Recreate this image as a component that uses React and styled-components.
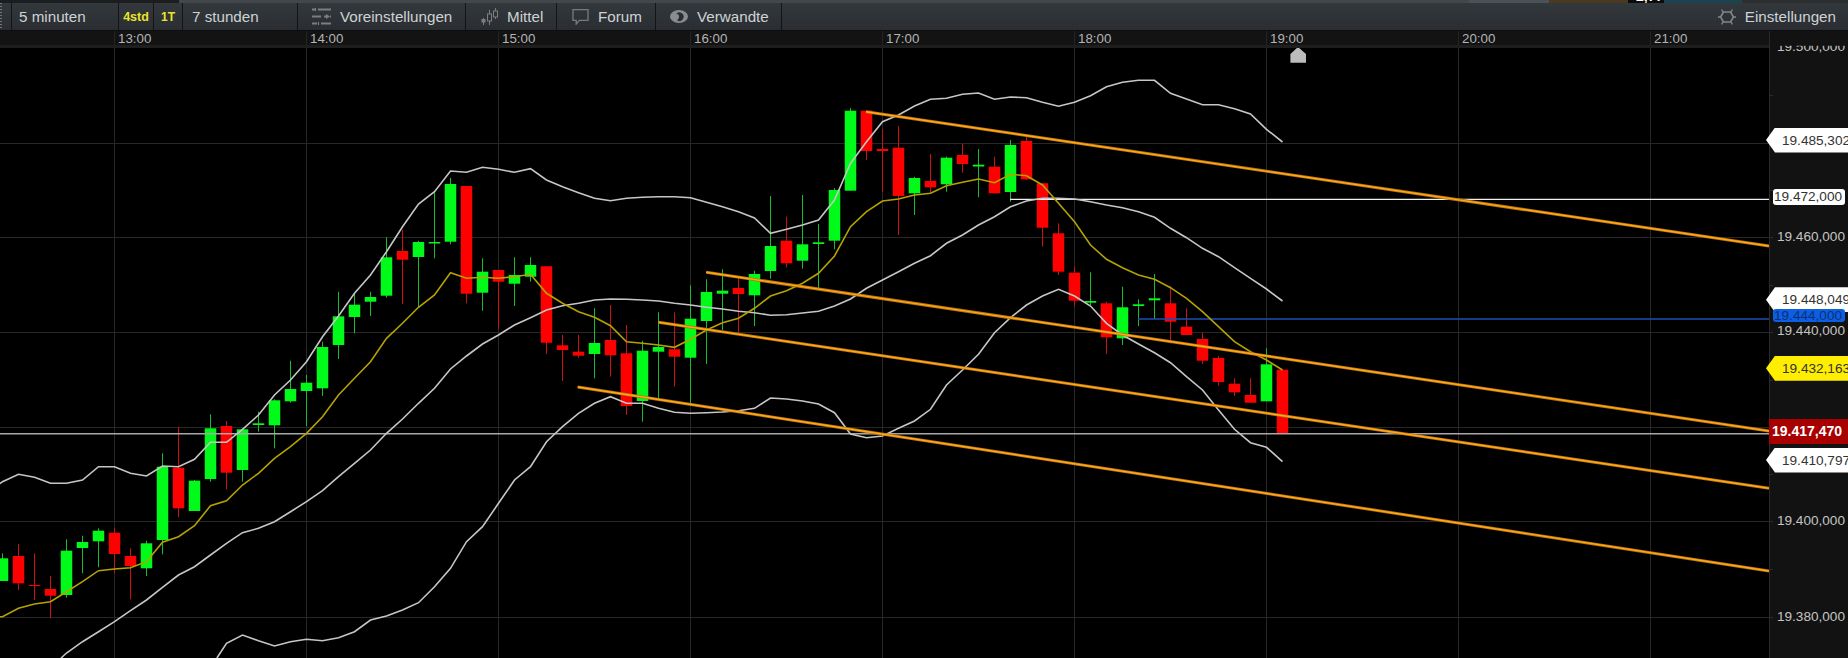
import React from 'react';
import styled, {createGlobalStyle} from 'styled-components'

const GlobalStyle = createGlobalStyle`
    html, body {
        margin: 0;
        padding: 0;
        background: #000;
    }
    * {
        box-sizing: border-box;
    }
`

// color, wick top, body top, body bottom, wick bottom
const candles = [
    ['g',553.3,558.3,581,581],['r',544,556,583.3,590],['r',553.3,585,586,600],['r',576,589,595.7,618.3],
    ['g',539.3,550.7,595,597.7],['g',535.7,542,548,573.3],['g',528.3,530.7,541.3,567.3],['r',528.3,532.7,554,573.3],
    ['r',548.3,556,566,599.3],['g',540.7,543.3,568.3,576],['g',453.3,466.7,540,554.3],['r',426.7,467.7,508.3,517.3],
    ['g',480,480.7,511,511],['g',414.3,428.3,479,481.7],['r',421,426,472.7,489.3],['g',428.3,429.3,470,481.7],
    ['g',411.7,423.3,425,431.7],['g',399.3,400.3,425.3,448.3],['g',360.7,389,401.3,402.7],['g',375,382.7,391,426],
    ['g',341.7,347,388.3,396],['g',291.7,316.3,345,359],['g',292.7,304.7,317,333.3],['g',291.7,297,301.7,316],
    ['g',237.3,257.3,295.7,297.7],['r',230,251,259.7,304],['g',240.7,242,257,307.7],['g',191.7,242,243.5,258.3],
    ['g',178,184,241.7,244.3],['r',186,186,293.7,303.3],['g',258.3,271.7,292.7,310.7],['r',270,270,281.7,329],
    ['g',257.3,275,283.7,306],['g',257.3,265,276.7,281.7],['r',266.3,266.3,342.7,354],['r',335,345.3,350,381],
    ['r',335,351.7,355.7,357.7],['g',308.3,343,354,378.3],['r',305,340,355.3,376.7],['r',325,353.3,406,415],
    ['g',340.7,350.7,401,421.7],['g',312.3,347,351.7,398.3],['r',312.3,349.3,356.7,386.7],['g',285.3,318.7,357.7,403.3],
    ['g',279.3,292,321,364],['g',269.3,290.7,293.7,330],['r',278.3,288,294,333.3],['g',270.7,274,295.3,326],
    ['g',196,246,271,278.7],['r',216.7,240.7,263.3,267.3],['g',195,244.3,260.7,268.7],['g',224,242.3,244,288.3],
    ['g',188,190,240.7,249.3],['g',108,110.7,190.7,190.7],['r',110.7,110.7,151,160],['r',129.3,149,151,192],
    ['r',126,147.7,196,235],['g',176.7,178,193.3,215],['r',154,181,187.3,193],['g',156.7,157.7,184.3,191.7],
    ['r',144,155,164,172.7],['g',149,164.7,166.5,197.3],['r',156.7,166.7,193.3,193.3],['g',140,145,192,201.7],
    ['r',135,141,179.3,180],['r',183.3,183.3,227.7,246.7],['r',223.3,233.3,271.7,275],['r',266.7,272.7,300.7,306],
    ['g',272.3,301,302.7,305],['r',301.7,303.3,337.3,354],['g',286.7,307.3,338.3,345],['g',299.3,304.3,306,326],
    ['g',274,298.3,300.3,319],['r',286,303.3,321.7,343.3],['r',308.3,326.7,335,335],['r',332.7,339,360.7,364],
    ['r',356,358,382,385.7],['r',378.3,383.7,392.3,396],['r',378.3,395,402.7,402.7],['g',348.3,364.3,401.3,401.3],
    ['r',369.7,369.7,433.3,433.3],
]

const upperBand = [481.7,474.3,477.3,483.3,483.3,480,466.7,466.7,473.3,476,466,466.7,459.3,442.3,442.3,429.3,415,395,380,361.7,
    336.7,316,293.3,275,251.7,226.7,204,191.7,171,172.3,167.3,169.3,172.3,168.7,180,186.7,192.7,198.3,200.7,198.3,
    197.3,196.7,196.7,197.7,202.3,206.7,211.7,218,233.3,229.3,225,220,200,163.3,141.7,121.7,115,106,99.3,98.3,
    94.3,93,99.3,97,97.7,102.3,106.3,102.3,95.7,86.7,82.3,80.3,80.3,93.3,99,104.7,104.7,108.7,114,129.3,142]

const middleBand = [[3.66,658],[4,653],[5,641.7],[6,631.7],[7,621.7],[8,610.7],[9,600],[10,587.3],[11,575],[12,566.7],[13,555],[14,543.3],
    [15,532.7],[16,528.3],[17,521.7],[18,511.7],[19,501.7],[20,490.7],[21,476.7],[22,463.3],[23,450],[24,433.3],[25,419],
    [26,403.3],[27,388.3],[28,369],[29,356],[30,344],[31,335],[32,325],[33,317.7],[34,310],[35,305.7],[36,303.3],[37,300],
    [38,299],[39,299.3],[40,300],[41,301],[42,303.3],[43,305],[44,307.3],[45,309],[46,311.3],[47,312.7],[48,315.3],[49,314.7],
    [50,313],[51,311.3],[52,306],[53,299],[54,288.3],[55,280],[56,271.7],[57,263.3],[58,255.7],[59,243.3],[60,235],[61,225],
    [62,216.7],[63,206.7],[64,201],[65,198.3],[66,198.3],[67,199],[68,201.7],[69,205],[70,207.7],[71,211.7],[72,217.3],
    [73,228.3],[74,237.7],[75,248.3],[76,256.7],[77,267.7],[78,278.3],[79,289],[80,301]]

const lowerBand = [[13.4,658],[14,643.3],[15,635],[16,640.7],[17,646],[18,641.7],[19,639.3],[20,640.7],[21,637.7],[22,631.7],[23,620],
    [24,616],[25,610],[26,602.7],[27,586.7],[28,568.3],[29,541.7],[30,526.7],[31,503.3],[32,480],[33,466.7],[34,441.7],[35,426.7],
    [36,413.3],[37,403.3],[38,396.7],[39,403.3],[40,403.3],[41,408.3],[42,412.3],[43,413.3],[44,412.7],[45,412],[46,410.7],[47,408.3],
    [48,398],[49,399],[50,401],[51,404],[52,412.7],[53,434],[54,437.7],[55,436],[56,428.3],[57,421],[58,409.3],[59,385],[60,370],
    [61,354.3],[62,332.7],[63,317.7],[64,305],[65,296],[66,289.3],[67,296],[68,306],[69,323.3],[70,335],[71,344],[72,352.7],[73,362.7],
    [74,376.7],[75,390],[76,410],[77,429.3],[78,442.7],[79,447.3],[80,461.7]]

const average = [616.7,608.3,604,601.7,591.7,581.7,570.7,569,567.7,561.7,542.3,536.7,525.7,505.7,500.7,485,473.3,458.3,446.7,433.3,
    416.7,395,378.3,361.7,338.3,323.3,307.3,295,272.7,278.3,277.3,278.3,276.7,274.3,293.3,303.3,311.7,317.3,325.7,341.7,
    343.3,345,347.3,339.3,330,322.7,318.3,308.3,296,290.7,283.3,273.3,256,226.7,211.7,201,199,195,193.3,185.7,
    182.3,179,182.7,174.3,175.7,185,203.3,221.7,245,259.3,267.7,275,279.3,287.7,298.3,311.7,326.7,341.7,351.7,360,370]

const channels = [
    [866,111.7,1769,246],
    [706.2,272.3,1769,431],
    [658.4,322.3,1769,488.3],
    [577.7,387,1769,571],
]

const candleX = (i) => 2.5 + 16 * i
const fromValues = (values) => values.map((y, i) => `${candleX(i)},${y}`).join(' ')
const fromPairs = (pairs) => pairs.map(([i, y]) => `${candleX(i)},${y}`).join(' ')

const hours = ['13:00','14:00','15:00','16:00','17:00','18:00','19:00','20:00','21:00']
const gridX = [114.5,306.5,498.5,690.5,882.5,1074.5,1266.5,1458.5,1650.5]
const gridY = [143.5,237.5,332.5,427.5,521.5,617.5]
const ticks = [95,190,285,380,474,569,143,237,332,427,521,617]

const SlidersIcon = () => (
    <IconSvg width="19" height="17" viewBox="0 0 19 17">
        <path d="M0 1.5h3M6 1.5h13M0 8.5h9M12 8.5h2M18 8.5h1M0 15.5h5M9 15.5h10" stroke="#7b7f82" strokeWidth="2" fill="none"/>
        <path d="M14 6l4 2.5-4 2.5z" fill="#7b7f82"/>
        <path d="M3.5 0v3M6.5 14v3" stroke="#7b7f82" strokeWidth="1.2"/>
    </IconSvg>
)

const CandleIcon = () => (
    <IconSvg width="17" height="17" viewBox="0 0 17 17">
        <path d="M2.5 10v7M8.5 2v15M14.5 0v11" stroke="#7b7f82" strokeWidth="1" fill="none"/>
        <rect x="0.5" y="11" width="4" height="3.5" fill="#7b7f82"/>
        <rect x="6.5" y="6" width="4" height="7" fill="#2d3236" stroke="#7b7f82"/>
        <rect x="12.5" y="3" width="4" height="6" fill="#2d3236" stroke="#7b7f82"/>
    </IconSvg>
)

const BubbleIcon = () => (
    <IconSvg width="17" height="16" viewBox="0 0 17 16">
        <path d="M1 .7h15v10.6H7.5L4.2 15v-3.7H1z" fill="none" stroke="#777b7e" strokeWidth="1.3"/>
    </IconSvg>
)

const EyeIcon = () => (
    <IconSvg width="18" height="13" viewBox="0 0 18 13">
        <ellipse cx="9" cy="6.5" rx="9" ry="6.5" fill="#8a8d8f"/>
        <path d="M6 4.2a4.2 4.2 0 1 1 1 6 4.6 4.6 0 0 0 1.5-5.7A3.6 3.6 0 0 0 6 4.2z" fill="#2a2e31"/>
    </IconSvg>
)

const GearIcon = () => (
    <IconSvg width="18" height="16" viewBox="0 0 18 16">
        <path d="M5.5 3h7L15.5 8l-3 5h-7l-3-5z" fill="none" stroke="#83878a" strokeWidth="1.6"/>
        <path d="M5 3L3.5 .5M13 3L14.5 .5M5 13l-1.5 2.5M13 13l1.5 2.5M2.5 8H0M15.5 8H18" stroke="#83878a" strokeWidth="1.4"/>
    </IconSvg>
)

const Chart = () => (
    <ChartSvg viewBox="0 48 1769 610" width="1769" height="610">
        {gridX.map(x => <line key={x} x1={x} x2={x} y1="48" y2="658" stroke="#272727" strokeWidth="1"/>)}
        {gridY.map(y => <line key={y} x1="0" x2="1769" y1={y} y2={y} stroke="#272727" strokeWidth="1"/>)}

        {candles.map(([color, wickTop, top, bottom, wickBottom], i) => {
            const x = candleX(i)
            return (
                <g key={i}>
                    <line x1={x} x2={x} y1={wickTop} y2={wickBottom} stroke={color === 'g' ? '#12c02c' : '#cc0f0f'} strokeWidth="1"/>
                    <rect x={x - 5.75} y={top} width="11.5" height={bottom - top} fill={color === 'g' ? '#00fa19' : '#ff0000'}/>
                </g>
            )
        })}

        <line x1="1010" x2="1769" y1="199.3" y2="199.3" stroke="#f0f0f0" strokeWidth="1.3"/>
        <line x1="1138" x2="1769" y1="319" y2="319" stroke="#1c4fb4" strokeWidth="1.3"/>
        <line x1="0" x2="1769" y1="433.7" y2="433.7" stroke="#a8a8a8" strokeWidth="1.5"/>

        <polyline points={`0,483.5 ${fromValues(upperBand)}`} fill="none" stroke="#c6c6c6" strokeWidth="1.6"/>
        <polyline points={fromPairs(middleBand)} fill="none" stroke="#c6c6c6" strokeWidth="1.6"/>
        <polyline points={fromPairs(lowerBand)} fill="none" stroke="#c6c6c6" strokeWidth="1.6"/>
        <polyline points={`0,616.7 ${fromValues(average)}`} fill="none" stroke="#b5a200" strokeWidth="1.6"/>

        {channels.map(([x1, y1, x2, y2]) => (
            <g key={y1}>
                <line x1={x1} y1={y1} x2={x2} y2={y2} stroke="#b97408" strokeWidth="3"/>
                <line x1={x1} y1={y1} x2={x2} y2={y2} stroke="#ffa81e" strokeWidth="1.4"/>
            </g>
        ))}

        <path d="M1298 47l8 7v8.7h-15.6V54z" fill="#bcbcbc"/>
    </ChartSvg>
)

const App = () => {
    return (
        <Page>
            <GlobalStyle/>
            <TopStrip>
                <Strip $width={179} $color="#1b1d1f"/>
                <Strip $grow $color="#43474b"/>
                <Strip $width={80} $color="#4b5156"/>
                <Strip $width={79} $color="#4a3b20"/>
                <Strip $width={36} $color="#0c0c0c"><CutValue>2,77</CutValue></Strip>
                <Strip $width={78} $color="#1b4450"/>
                <Strip $width={106} $color="#2c2e30"/>
            </TopStrip>

            <Toolbar>
                <Grip/>
                <ToolButton $width={107} $pad={7}>5 minuten</ToolButton>
                <RangeButton $width={35} $size={12.5}>4std</RangeButton>
                <RangeButton $width={29} $size={12}>1T</RangeButton>
                <ToolButton $width={115} $pad={9}>7 stunden</ToolButton>
                <ToolButton $width={168} $pad={14}><SlidersIcon/>Voreinstellungen</ToolButton>
                <ToolButton $width={91} $pad={15}><CandleIcon/>Mittel</ToolButton>
                <ToolButton $width={99} $pad={15}><BubbleIcon/>Forum</ToolButton>
                <ToolButton $width={126} $pad={14}><EyeIcon/>Verwandte</ToolButton>
                <SettingsButton><GearIcon/>Einstellungen</SettingsButton>
            </Toolbar>

            <Body>
                <ChartColumn>
                    <TimeAxis>
                        {hours.map(hour => <TimeCell key={hour}>{hour}</TimeCell>)}
                    </TimeAxis>
                    <Chart/>
                </ChartColumn>

                <ValueAxis>
                    {ticks.map(y => <Tick key={y} $y={y}/>)}
                    <TopValue $y={46.7}>19.500,000</TopValue>
                    <PlainValue $y={236.7}>19.460,000</PlainValue>
                    <PlainValue $y={330.7}>19.440,000</PlainValue>
                    <PlainValue $y={521}>19.400,000</PlainValue>
                    <PlainValue $y={616.7}>19.380,000</PlainValue>

                    <PointerTag $y={140} $bg="#ffffff">19.485,302</PointerTag>
                    <BoxTag $y={197} $bg="#ffffff" $color="#333">19.472,000</BoxTag>
                    <PointerTag $y={299.7} $bg="#ffffff">19.448,049</PointerTag>
                    <BoxTag $y={317.3} $bg="#0b5fe4" $color="#0d2f70">19.444,000</BoxTag>
                    <PointerTag $y={368.3} $bg="#ffee00">19.432,163</PointerTag>
                    <LastPrice>19.417,470</LastPrice>
                    <PointerTag $y={460} $bg="#ffffff">19.410,797</PointerTag>
                </ValueAxis>
            </Body>
        </Page>
    );
};

export default App;


const Page = styled.div`
    width: 1848px;
    height: 658px;
    overflow: hidden;
    display: flex;
    flex-direction: column;
    background: #000;
    font-family: "Liberation Sans", Arial, sans-serif;
`
const TopStrip = styled.div`
    height: 3px;
    display: flex;
    overflow: hidden;
`
const Strip = styled.div`
    flex: ${props => props.$grow ? '1' : `0 0 ${props.$width}px`};
    background: ${props => props.$color};
    overflow: hidden;
`
const CutValue = styled.div`
    margin: -11px 0 0 8px;
    font-size: 14px;
    line-height: 14px;
    font-weight: bold;
    color: #fff;
`
const Toolbar = styled.div`
    height: 28px;
    display: flex;
    align-items: stretch;
    background: linear-gradient(#33383c, #2a2e32);
    border-bottom: 1px solid #0c0d0e;
    color: #ced2d4;
    font-size: 15.2px;
`
const Grip = styled.div`
    width: 12px;
    border-right: 1px solid #121416;
    background-image: repeating-linear-gradient(#777 0 1px, transparent 1px 3px);
    background-size: 2px 100%;
    background-repeat: no-repeat;
`
const ToolButton = styled.div`
    width: ${props => props.$width}px;
    padding-left: ${props => props.$pad}px;
    display: flex;
    align-items: center;
    gap: 9px;
    border-right: 1px solid #121416;
    white-space: nowrap;
`
const RangeButton = styled.div`
    width: ${props => props.$width}px;
    display: flex;
    align-items: center;
    justify-content: center;
    border-right: 1px solid #121416;
    color: #ece32a;
    font-size: ${props => props.$size}px;
    font-weight: bold;
`
const SettingsButton = styled.div`
    margin-left: auto;
    padding-right: 12px;
    display: flex;
    align-items: center;
    gap: 9px;
`
const IconSvg = styled.svg`
    flex: none;
    display: block;
`
const Body = styled.div`
    flex: 1;
    display: flex;
`
const ChartColumn = styled.div`
    width: 1769px;
    display: flex;
    flex-direction: column;
`
const TimeAxis = styled.div`
    height: 17px;
    padding-left: 114px;
    display: flex;
    background: #131313;
    border-bottom: 3px solid #1e1e1e;
`
const TimeCell = styled.div`
    flex: 0 0 192px;
    padding-left: 3px;
    border-left: 1px solid #242424;
    color: #b4b4b4;
    font-size: 13.3px;
    line-height: 15px;
`
const ChartSvg = styled.svg`
    display: block;
    background: #000;
`
const ValueAxis = styled.div`
    position: relative;
    width: 79px;
    background: #121212;
    border-left: 1px solid #2a2a2a;
`
const Tick = styled.div`
    position: absolute;
    left: 0;
    top: ${props => props.$y - 31}px;
    width: 3px;
    height: 1px;
    background: #2c2c2c;
`
const PlainValue = styled.div`
    position: absolute;
    right: 3px;
    top: ${props => props.$y - 39}px;
    height: 16px;
    line-height: 16px;
    color: #c4c4c4;
    font-size: 13.6px;
`
const TopValue = styled(PlainValue)`
    clip-path: inset(7px 0 0 0);
`
const PointerTag = styled.div`
    position: absolute;
    left: -4px;
    right: 0;
    top: ${props => props.$y - 43.5}px;
    height: 25px;
    padding-left: 16px;
    line-height: 25px;
    background: ${props => props.$bg};
    color: #333;
    font-size: 13.6px;
    white-space: nowrap;
    overflow: hidden;
    clip-path: polygon(0 50%, 9px 0, 100% 0, 100% 100%, 9px 100%);
`
const BoxTag = styled.div`
    position: absolute;
    left: 3px;
    right: 3px;
    top: ${props => props.$y - 39}px;
    height: ${props => props.$bg === '#ffffff' ? 16 : 13}px;
    padding-left: 1px;
    line-height: ${props => props.$bg === '#ffffff' ? 16 : 13}px;
    border-radius: 3px;
    background: ${props => props.$bg};
    color: ${props => props.$color};
    font-size: 13.6px;
`
const LastPrice = styled.div`
    position: absolute;
    left: -1px;
    right: 0;
    top: 388px;
    height: 25px;
    padding-left: 3px;
    line-height: 25px;
    background: #a80000;
    color: #fff;
    font-size: 14px;
    font-weight: bold;
    white-space: nowrap;
`
